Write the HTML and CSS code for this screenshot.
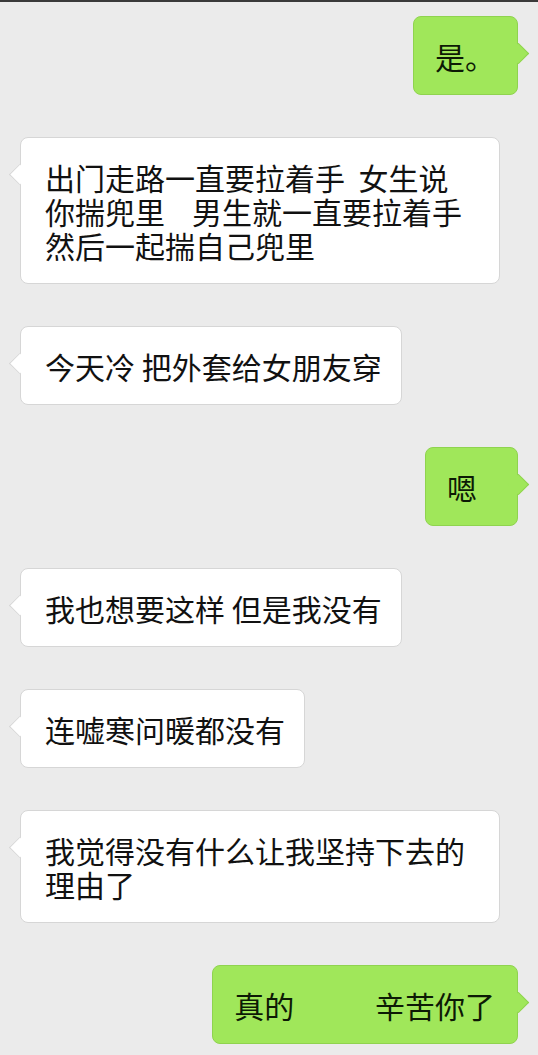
FILE: index.html
```html
<!DOCTYPE html>
<html lang="zh-CN">

<head>
  <meta charset="UTF-8">
  <meta name="viewport" content="width=device-width, initial-scale=1.0">
  <title>聊天</title>
  <link rel="stylesheet" href="styles.css">
</head>

<body>
  <div class="top-bar"></div>

  <div class="chat">
    <div class="msg me">
      <div class="bubble">是。</div>
    </div>

    <div class="msg other">
      <div class="bubble long">出门走路一直要拉着手  女生说<br>你揣兜里    男生就一直要拉着手<br>然后一起揣自己兜里</div>
    </div>

    <div class="msg other">
      <div class="bubble">今天冷 把外套给女朋友穿</div>
    </div>

    <div class="msg me">
      <div class="bubble">嗯</div>
    </div>

    <div class="msg other">
      <div class="bubble">我也想要这样 但是我没有</div>
    </div>

    <div class="msg other">
      <div class="bubble">连嘘寒问暖都没有</div>
    </div>

    <div class="msg other">
      <div class="bubble long">我觉得没有什么让我坚持下去的<br>理由了</div>
    </div>

    <div class="msg me">
      <div class="bubble">真的            辛苦你了</div>
    </div>
  </div>
</body>

</html>
```

FILE: styles.css
```css
body {
  margin: 0;
  background-color: #ebebeb;
  font-family: "Noto Sans CJK SC", "Noto Sans", sans-serif;
  overflow: hidden;
}

.top-bar {
  height: 2px;
  background-color: #3a3a3a;
}

.chat {
  display: flex;
  flex-direction: column;
  gap: 42px;
  padding: 14px 20px;
}

.msg {
  display: flex;
}

.msg.me {
  justify-content: flex-end;
}

.bubble {
  position: relative;
  box-sizing: border-box;
  min-width: 93px;
  padding: 22px 22px 21px 24px;
  border-radius: 8px;
  font-size: 30px;
  line-height: 34px;
  color: #111;
  white-space: pre-wrap;
}

.bubble::before {
  content: "";
  position: absolute;
  top: 29px;
  width: 14px;
  height: 14px;
  transform: rotate(45deg);
}

.other .bubble {
  background: #fff;
  border: 1px solid #d6d6d6;
  padding-right: 19px;
}

.other .bubble::before {
  left: -9px;
  background: #fff;
  border-left: 1px solid #d6d6d6;
  border-bottom: 1px solid #d6d6d6;
}

.me .bubble {
  background: #a0e75a;
  border: 1px solid #8fd34f;
  padding-left: 21px;
  color: #0d1a05;
}

.me .bubble::before {
  right: -9px;
  background: #a0e75a;
  border-right: 1px solid #8fd34f;
  border-top: 1px solid #8fd34f;
}

.bubble.long {
  width: 480px;
}
```
